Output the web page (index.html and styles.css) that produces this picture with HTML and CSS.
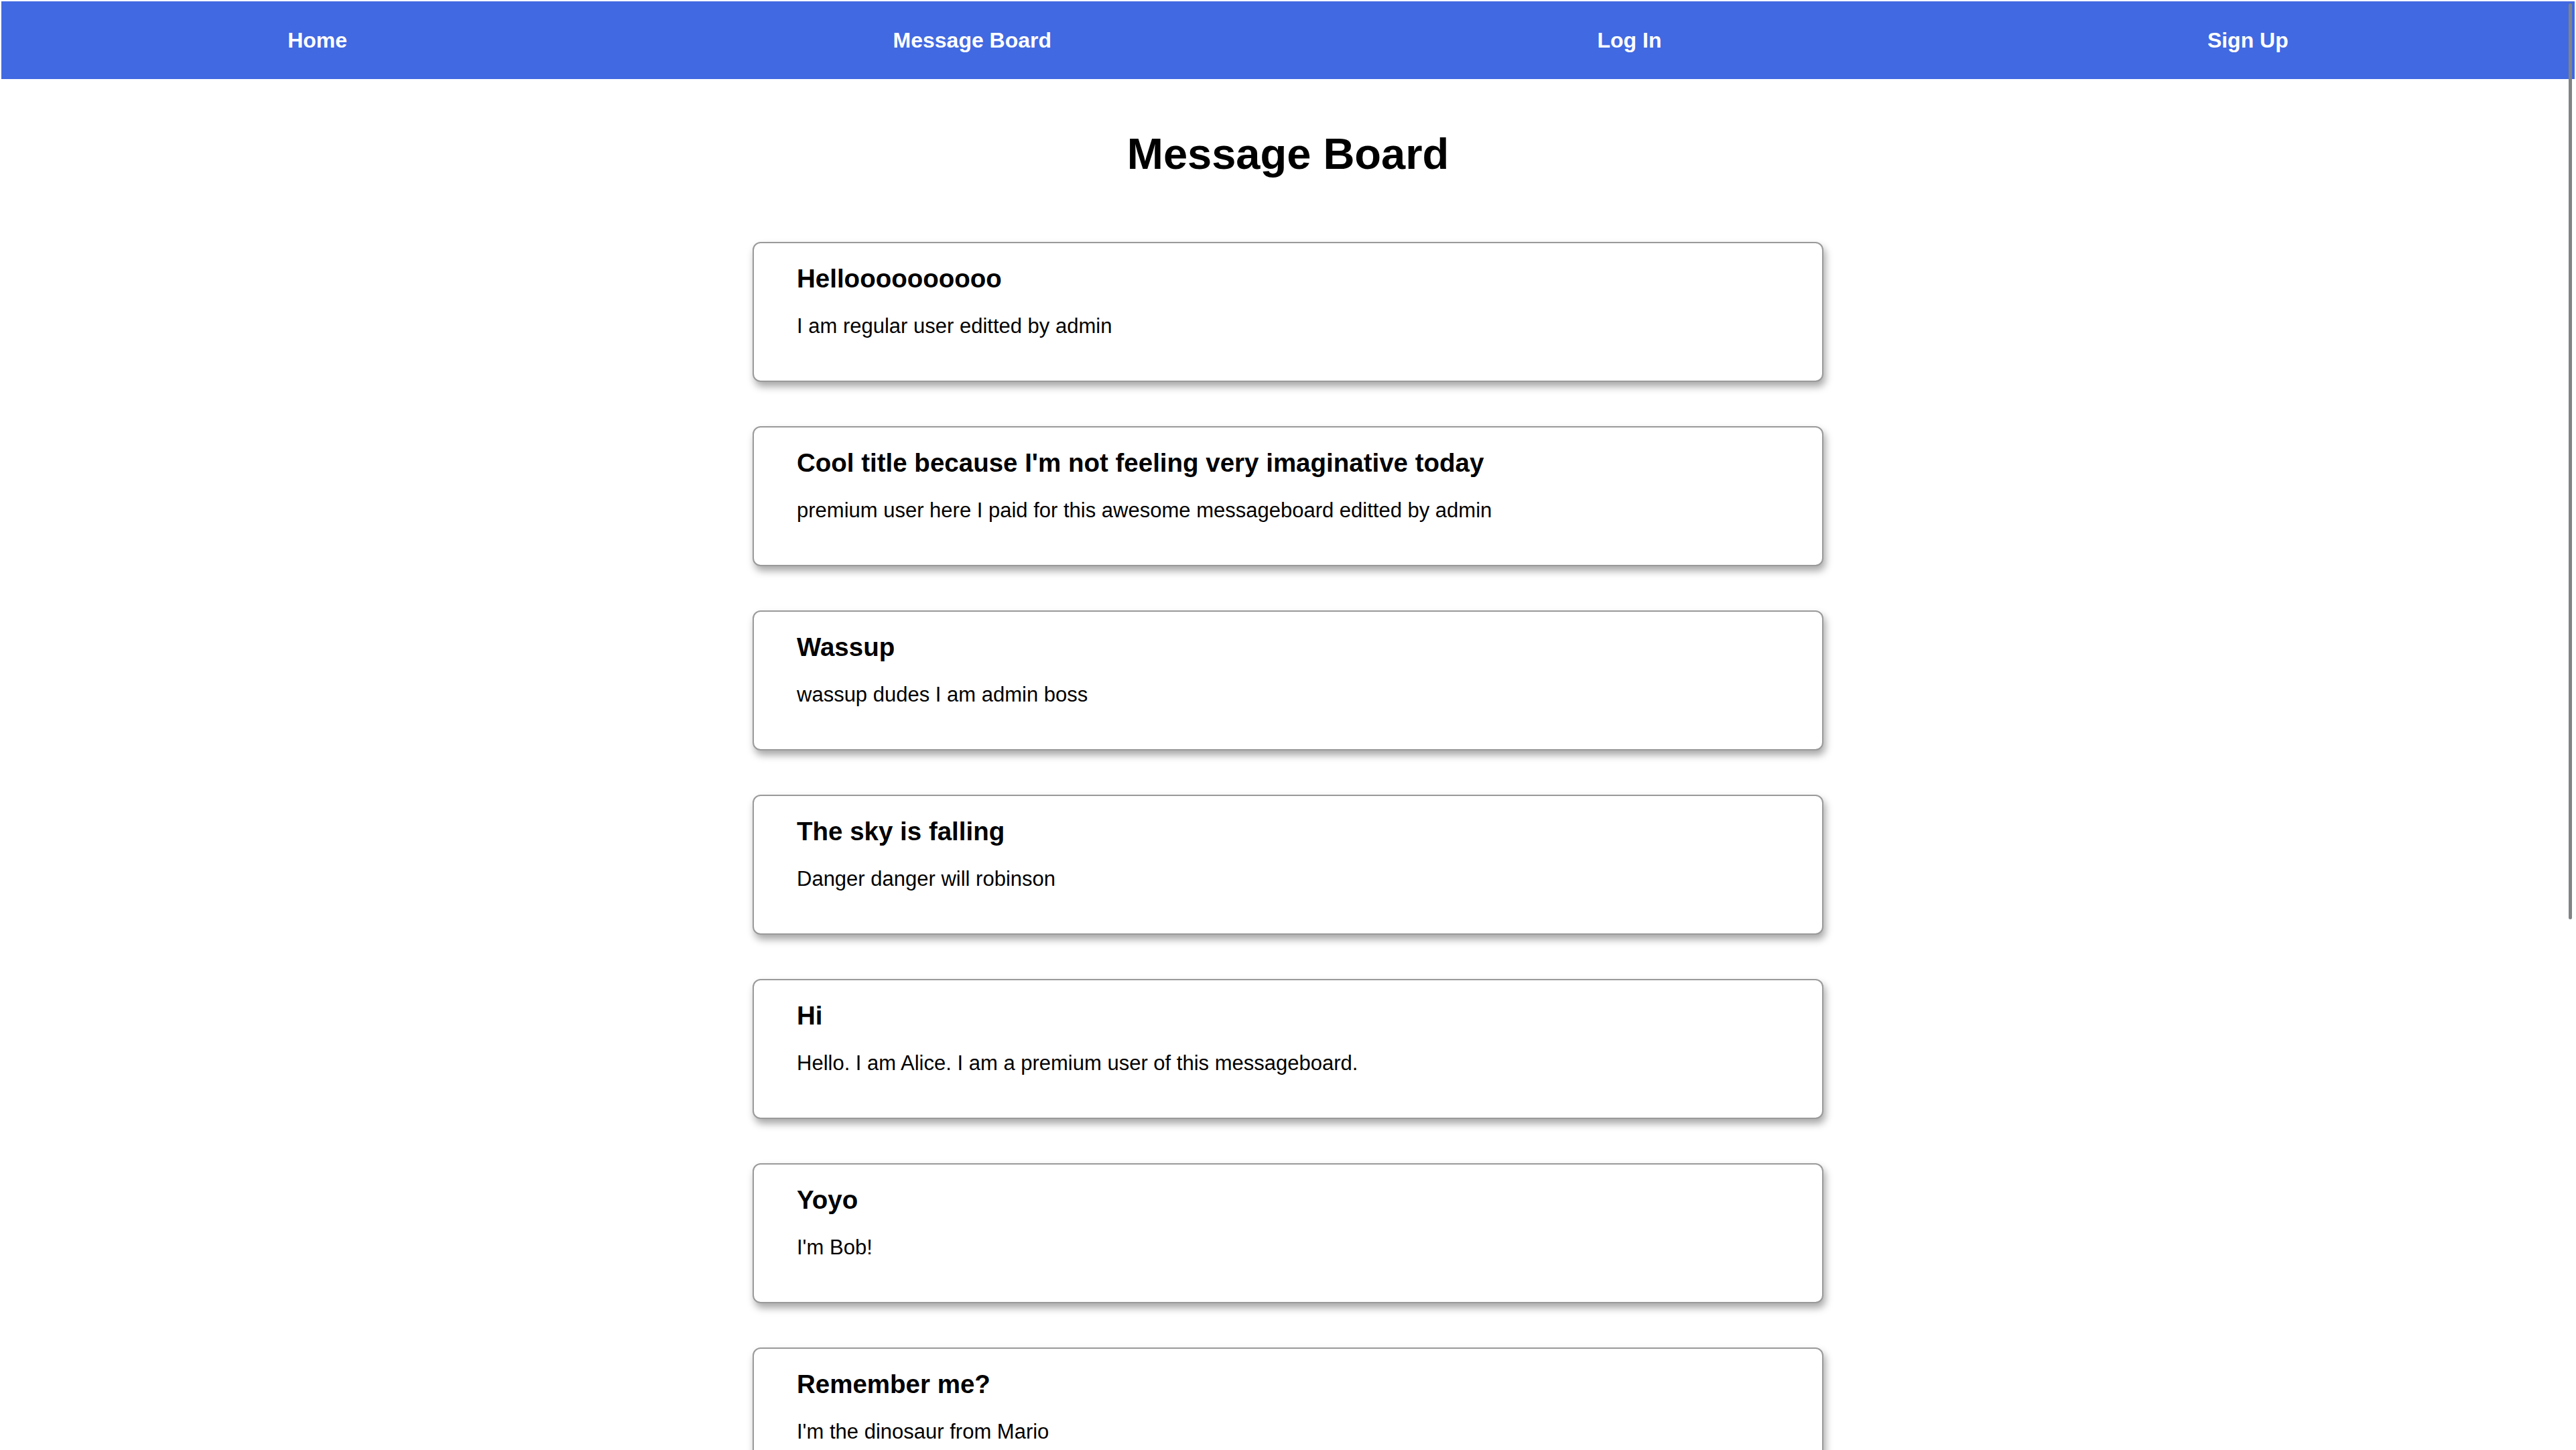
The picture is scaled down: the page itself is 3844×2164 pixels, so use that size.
FILE: index.html
```html
<!DOCTYPE html>
<html lang="en">
<head>
<meta charset="utf-8">
<title>Message Board</title>
<link rel="stylesheet" href="styles.css">
</head>
<body>
  <nav class="topnav">
    <a class="nav-link" href="#">Home</a>
    <a class="nav-link" href="#">Message Board</a>
    <a class="nav-link" href="#">Log In</a>
    <a class="nav-link" href="#">Sign Up</a>
  </nav>
  <main class="board">
    <h1 class="board-title">Message Board</h1>
    <div class="message-list">
      <article class="message-card">
        <h3 class="message-title">Helloooooooooo</h3>
        <p class="message-text">I am regular user editted by admin</p>
      </article>
      <article class="message-card">
        <h3 class="message-title">Cool title because I'm not feeling very imaginative today</h3>
        <p class="message-text">premium user here I paid for this awesome messageboard editted by admin</p>
      </article>
      <article class="message-card">
        <h3 class="message-title">Wassup</h3>
        <p class="message-text">wassup dudes I am admin boss</p>
      </article>
      <article class="message-card">
        <h3 class="message-title">The sky is falling</h3>
        <p class="message-text">Danger danger will robinson</p>
      </article>
      <article class="message-card">
        <h3 class="message-title">Hi</h3>
        <p class="message-text">Hello. I am Alice. I am a premium user of this messageboard.</p>
      </article>
      <article class="message-card">
        <h3 class="message-title">Yoyo</h3>
        <p class="message-text">I'm Bob!</p>
      </article>
      <article class="message-card">
        <h3 class="message-title">Remember me?</h3>
        <p class="message-text">I'm the dinosaur from Mario</p>
      </article>
    </div>
  </main>
  <div class="scroll-thumb"></div>
</body>
</html>
```
FILE: styles.css
```css
html {
  scrollbar-width: none;
}
html::-webkit-scrollbar,
body::-webkit-scrollbar {
  display: none;
}
body {
  margin: 0;
  padding: 2px 2px 0;
  background: #ffffff;
  color: #000000;
  font-family: "Liberation Sans", Arial, Helvetica, sans-serif;
}
.topnav {
  display: flex;
  justify-content: space-around;
  align-items: center;
  height: 116px;
  padding: 0 20px;
  background: #4169e1;
}
.nav-link {
  color: #ffffff;
  font-size: 32px;
  font-weight: bold;
  text-decoration: none;
}
.board {
  display: flex;
  flex-direction: column;
  align-items: center;
  padding-bottom: 120px;
}
.board-title {
  margin: 74px 0 94px;
  font-size: 65px;
  line-height: 75px;
  font-weight: bold;
}
.message-list {
  display: flex;
  flex-direction: column;
  gap: 66px;
  width: 1598px;
}
.message-card {
  box-sizing: border-box;
  height: 209px;
  padding: 31px 62px 0 64px;
  border: 2px solid #9a9a9a;
  border-radius: 12px;
  background: #ffffff;
  box-shadow: 3px 7px 12px rgba(0, 0, 0, 0.35);
}
.message-title {
  margin: 0 0 31px;
  font-size: 38.5px;
  line-height: 44px;
  font-weight: bold;
}
.message-text {
  margin: 0;
  font-size: 31px;
  line-height: 36px;
}
.scroll-thumb {
  position: fixed;
  top: 5px;
  right: 6px;
  width: 5px;
  height: 1367px;
  border-radius: 3px;
  background: #818485;
}
```
